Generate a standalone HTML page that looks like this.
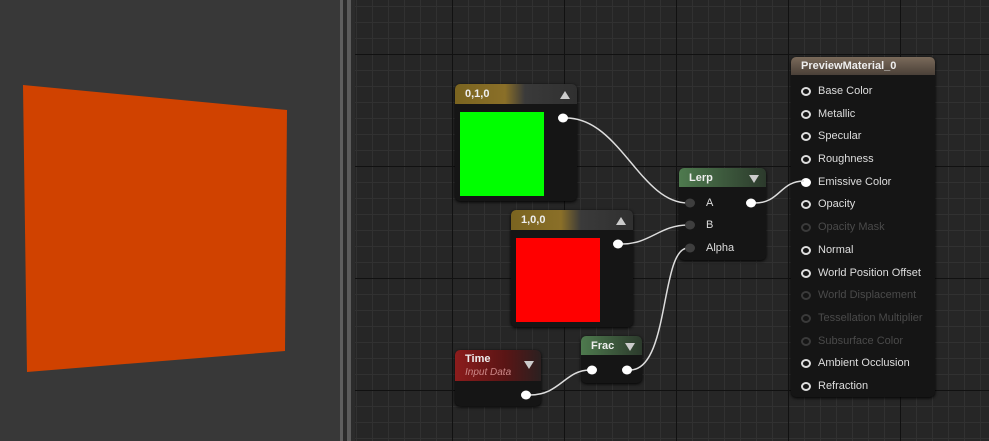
<!DOCTYPE html>
<html style="margin:0;width:989px;height:441px;overflow:hidden"><head><style>
body{margin:0;width:989px;height:441px;overflow:hidden;background:#262626;font-family:"Liberation Sans",sans-serif;position:relative}
#left{position:absolute;left:0;top:0;width:340px;height:441px;background:#383838}
#div{position:absolute;left:340px;top:0;width:15px;height:441px;background:linear-gradient(90deg,#5e5e5e 0 3px,#2a2a2a 3px 7px,#5a5a5a 7px 11px,#2b2b2b 11px)}
#graph{position:absolute;left:355px;top:0;width:634px;height:441px;
background:
linear-gradient(90deg,transparent 97px,#111 97px 98px,transparent 98px) 0 0/112px 100%,
linear-gradient(0deg,transparent 0,transparent 111px,#111 111px 112px) 0 -58px/100% 112px,
linear-gradient(90deg,#313131 1px,transparent 1px) 1px 0/16px 100%,
linear-gradient(#313131 1px,transparent 1px) 0 6px/100% 16px,#262626}
.n{position:absolute;background:#151515;border-radius:5px;box-shadow:0 1px 3px #000;overflow:hidden}
.h{height:20px;color:#eee;font-size:11px;line-height:20px;padding-left:10px;font-weight:bold;position:relative}
.tri{position:absolute;right:7px;top:7px;width:0;height:0;border-left:5px solid transparent;border-right:5px solid transparent}
.up{border-bottom:8px solid #ccc}
.dn{border-top:8px solid #ccc}
.rows div{height:22.7px;line-height:22.7px;font-size:11px;color:#ddd;position:relative;padding-left:27px}
.rows div:before{content:"";position:absolute;left:10px;top:7px;width:6px;height:5px;border:2px solid #ddd;border-radius:50%}
.rows div.d{color:#4a4a4a}.rows div.d:before{border-color:#3a3a3a}
.rows div.f:before{background:#fff;border-color:#fff}
</style></head><body>
<div id="left"><svg width="340" height="441"><polygon points="23,85 287,110 285,351 27,372" fill="#d04200"/></svg></div>
<div id="div"></div>
<div id="graph"></div>

<div class="n" style="left:455px;top:84px;width:122px;height:117px">
<div class="h" style="background:linear-gradient(90deg,#7a6420 0,#8a6f28 50px,#3a3a3a 70px,#303030)">0,1,0<div class="tri up"></div></div>
<div style="position:absolute;left:5px;top:28px;width:84px;height:84px;background:#0f0"></div></div>
<div class="n" style="left:511px;top:210px;width:122px;height:117px">
<div class="h" style="background:linear-gradient(90deg,#7a6420 0,#8a6f28 50px,#3a3a3a 70px,#303030)">1,0,0<div class="tri up"></div></div>
<div style="position:absolute;left:5px;top:28px;width:84px;height:84px;background:#f00"></div></div>
<div class="n" style="left:679px;top:168px;width:87px;height:92px">
<div class="h" style="height:19px;background:linear-gradient(90deg,#4e7a4e,#2c3a2c)">Lerp<div class="tri dn"></div></div>
<div style="position:absolute;left:27px;top:29px;color:#ddd;font-size:11px">A</div>
<div style="position:absolute;left:27px;top:51px;color:#ddd;font-size:11px">B</div>
<div style="position:absolute;left:27px;top:74px;color:#ddd;font-size:11px">Alpha</div></div>
<div class="n" style="left:455px;top:350px;width:86px;height:56px">
<div class="h" style="height:31px;line-height:13px;padding-top:3px;box-sizing:border-box;background:linear-gradient(90deg,#8c1c1c,#5a1515 50px,#2b2020)">Time<br><i style="font-weight:normal;color:#c88;font-size:10px">Input Data</i><div class="tri dn" style="top:11px"></div></div></div>
<div class="n" style="left:581px;top:336px;width:61px;height:47px">
<div class="h" style="height:19px;background:linear-gradient(90deg,#4e7a4e,#2c3a2c)">Frac<div class="tri dn"></div></div></div>
<div class="n" style="left:791px;top:57px;width:144px;height:340px">
<div class="h" style="height:18px;line-height:18px;background:linear-gradient(180deg,#7a6a5a,#4a4038);font-size:11px">PreviewMaterial_0</div>
<div class="rows" style="padding-top:5px">
<div>Base Color</div><div>Metallic</div><div>Specular</div><div>Roughness</div><div class="f">Emissive Color</div><div>Opacity</div><div class="d">Opacity Mask</div><div>Normal</div><div>World Position Offset</div><div class="d">World Displacement</div><div class="d">Tessellation Multiplier</div><div class="d">Subsurface Color</div><div>Ambient Occlusion</div><div>Refraction</div></div></div>

<svg style="position:absolute;left:0;top:0" width="989" height="441">
<g fill="none" stroke="#ddd" stroke-width="1.5">
<path d="M566 118 C620 118,640 203,688 203"/>
<path d="M622 244 C650 244,660 225,688 225"/>
<path d="M630 370 C670 370,660 248,688 248"/>
<path d="M530 395 C560 395,565 370,590 370"/>
<path d="M755 203 C780 203,780 181,804 181"/>
</g>
<g fill="#fff"><ellipse cx="563" cy="118" rx="5" ry="4.5"/><ellipse cx="618" cy="244" rx="5" ry="4.5"/><ellipse cx="751" cy="203" rx="5" ry="4.5"/><ellipse cx="526" cy="395" rx="5" ry="4.5"/><ellipse cx="592" cy="370" rx="5" ry="4.5"/><ellipse cx="627" cy="370" rx="5" ry="4.5"/></g>
<g fill="#3e3e3e"><ellipse cx="690" cy="203" rx="5" ry="4.5"/><ellipse cx="690" cy="225" rx="5" ry="4.5"/><ellipse cx="690" cy="248" rx="5" ry="4.5"/></g>
</svg>
</body></html>
